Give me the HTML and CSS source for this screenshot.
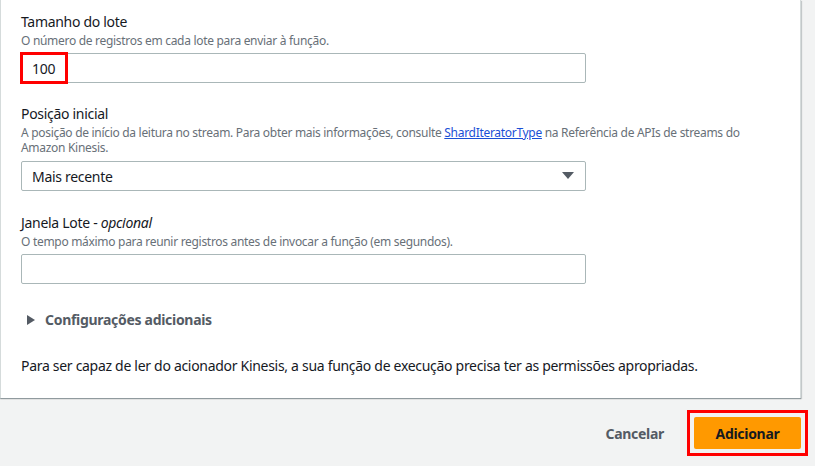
FILE: index.html
```html
<!DOCTYPE html>
<html lang="pt">
<head>
<meta charset="utf-8">
<link rel="stylesheet" href="styles.css">
</head>
<body>
<div class="page">
  <div class="card">
    <div class="field">
      <div class="label">Tamanho do lote</div>
      <div class="desc">O número de registros em cada lote para enviar à função.</div>
      <div class="input"><span class="value">100</span><span class="highlight"></span></div>
    </div>
    <div class="field field-wide">
      <div class="label">Posição inicial</div>
      <div class="desc desc-wide">A posição de início da leitura no stream. Para obter mais informações, consulte <a href="#">ShardIteratorType</a> na Referência de APIs de streams do Amazon Kinesis.</div>
      <div class="input select"><span class="value">Mais recente</span>
        <svg class="caret" width="12" height="8" viewBox="0 0 12 8"><path d="M0 0H12L6 7Z" fill="#545b64"/></svg>
      </div>
    </div>
    <div class="field">
      <div class="label">Janela Lote - <i>opcional</i></div>
      <div class="desc">O tempo máximo para reunir registros antes de invocar a função (em segundos).</div>
      <div class="input"></div>
    </div>
    <div class="expander">
      <svg width="8" height="10" viewBox="0 0 8 10"><path d="M0 0L8 5L0 10Z" fill="#545b64"/></svg>
      <span>Configurações adicionais</span>
    </div>
    <p class="note">Para ser capaz de ler do acionador Kinesis, a sua função de execução precisa ter as permissões apropriadas.</p>
  </div>
  <div class="actions">
    <button class="btn-link">Cancelar</button>
    <div class="btn-wrap"><button class="btn-primary">Adicionar</button></div>
  </div>
</div>
</body>
</html>
```

FILE: styles.css
```css
html, body {
  margin: 0;
  padding: 0;
  background: #f2f3f3;
  font-family: "Noto Sans", "Open Sans", Arial, sans-serif;
  color: #16191f;
  letter-spacing: -0.3px;
}
.page {
  width: 815px;
  height: 466px;
  overflow: hidden;
}
.card {
  width: 801px;
  box-sizing: border-box;
  background: #fff;
  border-left: 1px solid #d5dbdb;
  border-right: 1px solid #d5dbdb;
  box-shadow: 0 1px 1px 0 rgba(0, 28, 36, 0.3), 1px 1px 1px 0 rgba(0, 28, 36, 0.15);
  padding: 11px 20px 21px 20px;
  display: flex;
  flex-direction: column;
}
.field {
  display: flex;
  flex-direction: column;
  margin-bottom: 20px;
}
.field-wide {
  margin-bottom: 21px;
}
.label {
  font-size: 14px;
  line-height: 22px;
}
.label i {
  font-style: italic;
}
.desc {
  font-size: 12px;
  line-height: 16px;
  color: #687078;
  margin-bottom: 4px;
  width: 745px;
}
.desc-wide {
  line-height: 15px;
  margin-bottom: 6px;
}
.desc a {
  color: #1a4fd6;
  text-decoration: underline;
}
.input {
  position: relative;
  width: 565px;
  height: 30px;
  box-sizing: border-box;
  border: 1px solid #aab7b8;
  border-radius: 2px;
  display: flex;
  align-items: center;
  padding: 0 10px;
  font-size: 14px;
}
.value {
  color: #16191f;
}
.highlight {
  position: absolute;
  left: -2px;
  top: -2px;
  width: 48px;
  height: 32px;
  box-sizing: border-box;
  border: 3px solid #ff0000;
}
.select {
  justify-content: space-between;
}
.caret {
  margin-right: 1px;
}
.expander {
  display: flex;
  align-items: center;
  gap: 10px;
  margin: 5px 0 0 6px;
  font-size: 14px;
  line-height: 22px;
  font-weight: 700;
  color: #545b64;
}
.note {
  margin: 24px 0 0 0;
  font-size: 14px;
  line-height: 22px;
}
.actions {
  display: flex;
  justify-content: flex-end;
  align-items: center;
  gap: 23px;
  padding: 12px 7px 0 0;
}
.btn-link {
  background: none;
  border: none;
  font-family: inherit;
  letter-spacing: inherit;
  font-size: 14px;
  font-weight: 700;
  color: #545b64;
  padding: 0;
}
.btn-wrap {
  border: 3px solid #ff0000;
  padding: 4px;
}
.btn-primary {
  display: block;
  background: #ff9900;
  border: none;
  border-radius: 2px;
  width: 107px;
  height: 32px;
  font-family: inherit;
  letter-spacing: inherit;
  font-size: 14px;
  font-weight: 700;
  color: #16191f;
}
```
